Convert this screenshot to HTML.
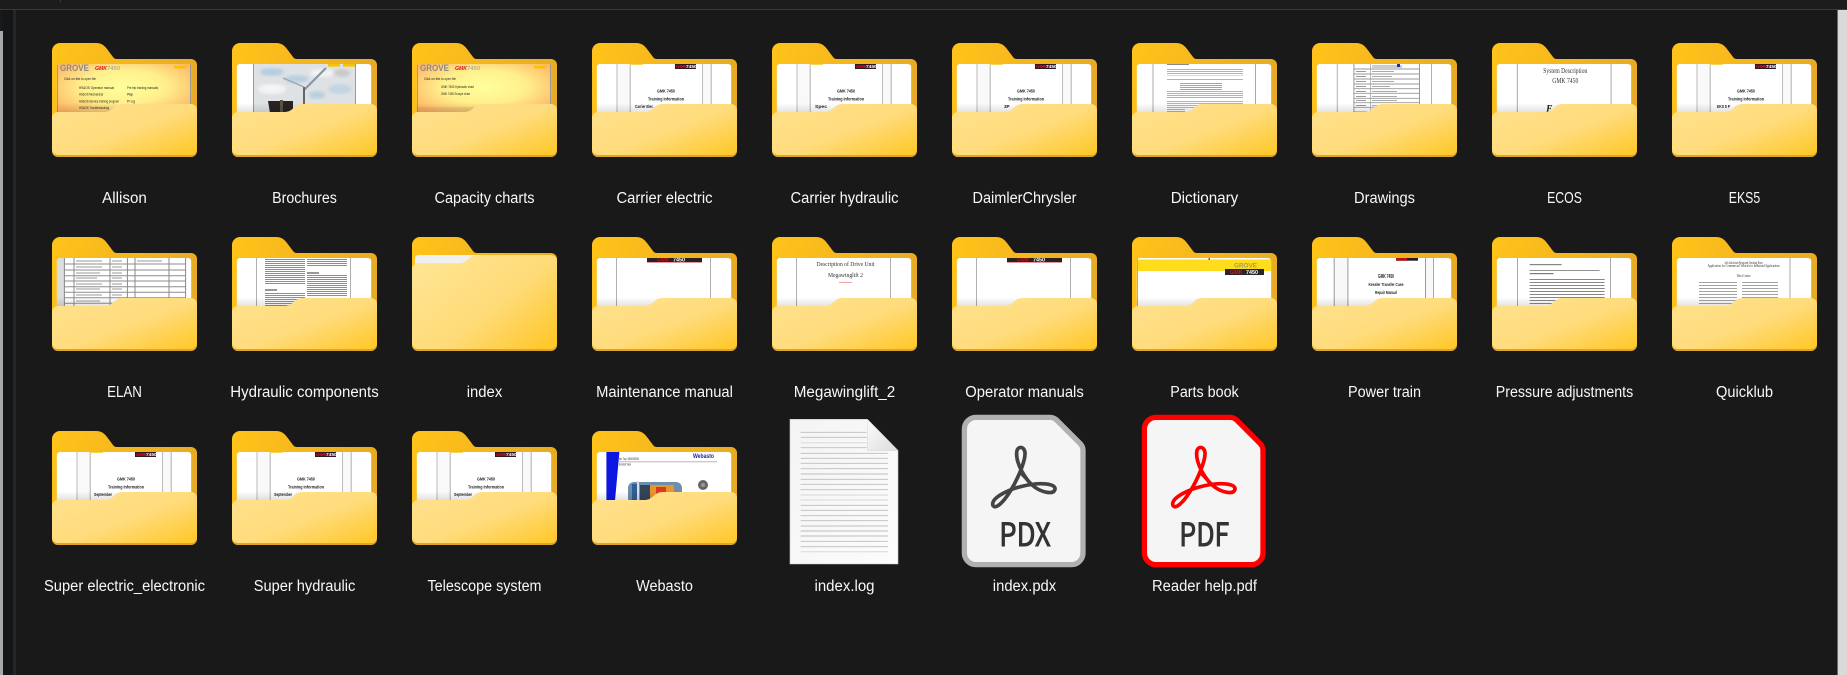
<!DOCTYPE html>
<html lang="en"><head><meta charset="utf-8"><title>Folder view</title>
<style>
html,body{margin:0;padding:0;background:#191919;width:1847px;height:675px;overflow:hidden}
svg{display:block;position:absolute;left:0;top:0}
.l{font:15.5px "Liberation Sans",sans-serif;fill:#f6f8fa;text-anchor:middle}
.t{font-family:"Liberation Sans",sans-serif;fill:#222}
.s{font-family:"Liberation Serif",serif;fill:#333;text-anchor:middle}
.b{font-weight:bold;font-family:"Liberation Sans",sans-serif;fill:#222;text-anchor:middle}
.big{font:400 32px "Noto Sans CJK SC","Liberation Sans",sans-serif;fill:#333;stroke:#333;stroke-width:.9}
</style></head><body>
<svg width="1847" height="675" viewBox="0 0 1847 675" xmlns="http://www.w3.org/2000/svg">
<defs>
<linearGradient id="bk" x1="0" y1="0" x2="1" y2=".3"><stop offset="0" stop-color="#ffc41a"/><stop offset=".4" stop-color="#f7b91c"/><stop offset="1" stop-color="#e6ab24"/></linearGradient>
<linearGradient id="fr" x1=".08" y1=".15" x2=".95" y2=".95"><stop offset="0" stop-color="#ffe08a"/><stop offset=".5" stop-color="#ffdc7c"/><stop offset="1" stop-color="#ffc92f"/></linearGradient>
<linearGradient id="frt" x1=".05" y1=".15" x2=".98" y2=".9"><stop offset="0" stop-color="#ffe491"/><stop offset=".55" stop-color="#ffdb78"/><stop offset="1" stop-color="#ffc82c"/></linearGradient>
<linearGradient id="sh" x1="0" y1="0" x2="0" y2="1"><stop offset="0" stop-color="#000" stop-opacity="0"/><stop offset="1" stop-color="#000" stop-opacity=".12"/></linearGradient>
<radialGradient id="gr" cx=".5" cy=".42" r=".62"><stop offset="0" stop-color="#ffff9c"/><stop offset=".5" stop-color="#fff08c"/><stop offset="1" stop-color="#ffb666"/></radialGradient>
<linearGradient id="page" x1="0" y1="0" x2="1" y2="1"><stop offset="0" stop-color="#f4f4f4"/><stop offset="1" stop-color="#fcfcfc"/></linearGradient>
<linearGradient id="flap" x1="0" y1="0" x2="1" y2="1"><stop offset="0" stop-color="#fcfcfc"/><stop offset="1" stop-color="#dcdcdc"/></linearGradient>
<pattern id="tl" width="3" height="2" patternUnits="userSpaceOnUse"><rect width="3" height="1" fill="#444"/></pattern>
<pattern id="tlr" width="3" height="2" patternUnits="userSpaceOnUse"><rect width="3" height="1" fill="#d8352a"/></pattern>
<pattern id="tl3" width="3" height="3" patternUnits="userSpaceOnUse"><rect width="3" height="1" fill="#555"/></pattern>
<clipPath id="pc"><rect x="4.7" y="21" width="134.6" height="54" rx="3"/></clipPath>
<filter id="bl"><feGaussianBlur stdDeviation="1.6"/></filter>
<filter id="sf" x="-5%" y="-5%" width="110%" height="110%"><feGaussianBlur stdDeviation=".35"/></filter>
<g id="back"><path fill="url(#bk)" d="M8 0H44C49 0 52 2 55 6L61 14C62 15.5 63.5 16 65 16H139A6 6 0 0 1 145 22V108A6 6 0 0 1 139 114H6A6 6 0 0 1 0 108V8A8 8 0 0 1 8 0Z"/><rect x="1" y="100" width="143" height="14" rx="6" fill="#e0a428"/></g>
<g id="front"><rect x="4.7" y="60" width="134.6" height="10" fill="url(#sh)"/><path fill="url(#fr)" d="M6 69H52C56 69 58 68 61 65.5C64 62.5 67 61 71 61H139A6 6 0 0 1 145 67V106A6 6 0 0 1 139 112H6A6 6 0 0 1 0 106V75A6 6 0 0 1 6 69Z"/></g>
<g id="paper"><rect x="4.7" y="21" width="134.6" height="54" rx="3" fill="#fff"/></g>
<g id="v2"><rect x="24" y="21" width="1" height="54" fill="#b0b0b0"/><rect x="118" y="21" width="1" height="54" fill="#b0b0b0"/></g>
<g id="v4"><rect x="25" y="21" width="13" height="54" fill="#f9f9f9"/><rect x="110" y="21" width="9" height="54" fill="#f9f9f9"/><rect x="24.5" y="21" width="1" height="54" fill="#bbb"/><rect x="37.7" y="21" width="1" height="54" fill="#b0b0b0"/><rect x="110" y="21" width="1" height="54" fill="#bbb"/><rect x="118.7" y="21" width="1" height="54" fill="#b0b0b0"/><rect x="38" y="21" width="13" height="1" fill="#f5d65a"/></g>
<g id="acro"><path fill="none" stroke="currentColor" stroke-width="11" stroke-linejoin="round" d="M100 288C108 296 128 280 150 245C175 205 197 150 195 128C193 107 171 107 170 128C168 160 195 210 225 232C245 246 280 256 285 238C288 220 240 216 190 228C145 238 98 262 98 282C98 285 99 287 100 288Z"/><path fill="none" stroke="currentColor" stroke-width="5" d="M183 175L152 240M180 190L218 230M160 238L212 224"/></g>
<g id="pageic"><path fill="#f5f5f5" stroke="currentColor" stroke-width="5.3" d="M976 417.4H1050C1053 417.4 1055 418.4 1057 420.4L1079 442.4C1082 445.4 1083 447 1083 451V553A11.6 11.6 0 0 1 1071.4 564.6H976A11.6 11.6 0 0 1 964.4 553V429A11.6 11.6 0 0 1 976 417.4Z"/></g>
</defs>

<rect width="1847" height="675" fill="#191919"/>
<rect width="1847" height="9" fill="#1c1c1c"/>
<rect y="9" width="1847" height="1" fill="#3a3a3a"/>
<rect x="60" y="0" width="1" height="2" fill="#3a3a3a"/>
<rect x="3" y="10" width="10" height="665" fill="#14171a"/>
<rect x="13" y="10" width="3" height="665" fill="#262626"/>
<rect x="0" y="31" width="3" height="644" fill="#a8a8a8"/>
<rect x="1838" y="10" width="9" height="665" fill="#dadada"/>
<rect x="1837" y="10" width="1" height="665" fill="#6a6a6a"/>

<!-- ROW 1 -->
<g transform="translate(52,43)"><use href="#back"/><g clip-path="url(#pc)" filter="url(#sf)"><rect x="4.7" y="21" width="134.6" height="54" fill="url(#gr)"/>
<rect x="5" y="21" width="1" height="54" fill="#999"/><rect x="138" y="21" width="1" height="54" fill="#999"/>
<text x="8" y="28" font-size="9" font-weight="bold" font-family="Liberation Sans" fill="#8a8a8a" textLength="29" lengthAdjust="spacingAndGlyphs">GROVE</text>
<text x="43" y="27" font-size="5" font-weight="bold" font-style="italic" font-family="Liberation Sans" fill="#d01818" textLength="12" lengthAdjust="spacingAndGlyphs">GMK</text><text x="55" y="27" font-size="5" font-family="Liberation Sans" fill="#999" textLength="13" lengthAdjust="spacingAndGlyphs">7450</text>
<rect x="122" y="23" width="12" height="2.4" fill="#f5c400"/>
<text class="t" x="12" y="37" font-size="3.4" textLength="32" lengthAdjust="spacingAndGlyphs">Click on title to open file</text>
<text class="t" x="27" y="46" font-size="3.4" textLength="35" lengthAdjust="spacingAndGlyphs">HS&amp;OS Operator manual</text><text class="t" x="75" y="46" font-size="3.4" textLength="31" lengthAdjust="spacingAndGlyphs">Pre trip training manuals</text>
<text class="t" x="27" y="52.5" font-size="3.4" textLength="24" lengthAdjust="spacingAndGlyphs">HS&amp;OS Mechanical</text><text class="t" x="75" y="52.5" font-size="3.4" textLength="6">Prep</text>
<text class="t" x="27" y="59.5" font-size="3.4" textLength="40" lengthAdjust="spacingAndGlyphs">HS&amp;OS Service training program</text><text class="t" x="75" y="59.5" font-size="3.4" textLength="8">Prog</text>
<text class="t" x="27" y="66" font-size="3.4" textLength="30" lengthAdjust="spacingAndGlyphs">HS&amp;OS Troubleshooting</text></g><use href="#front"/></g>

<g transform="translate(232,43)"><use href="#back"/><g clip-path="url(#pc)" filter="url(#sf)"><use href="#paper"/>
<rect x="21" y="21" width="103" height="54" fill="#dfe2e4"/>
<ellipse cx="40" cy="29" rx="12" ry="4" fill="#b5cde0" filter="url(#bl)"/><ellipse cx="65" cy="36" rx="12" ry="4" fill="#b9d0e1" filter="url(#bl)"/><ellipse cx="90" cy="30" rx="12" ry="4" fill="#f2f3f4" filter="url(#bl)"/><ellipse cx="108" cy="46" rx="12" ry="5" fill="#c2d4e2" filter="url(#bl)"/><ellipse cx="40" cy="46" rx="14" ry="5" fill="#f4f5f5" filter="url(#bl)"/><ellipse cx="85" cy="52" rx="8" ry="4" fill="#b8cfe0" filter="url(#bl)"/><ellipse cx="110" cy="30" rx="8" ry="4" fill="#c9c9cb" filter="url(#bl)"/>
<rect x="21" y="21" width="1" height="54" fill="#999"/><rect x="123" y="21" width="1" height="54" fill="#999"/>
<path d="M72 47L94 25" stroke="#8a97a3" stroke-width="2.2" fill="none"/><path d="M51 35L72 44" stroke="#9aa6b0" stroke-width="1.4" fill="none"/><path d="M72 44V70" stroke="#666" stroke-width="2" fill="none"/>
<path d="M36 58H61V70H38Z" fill="#2b2422"/><rect x="48" y="57" width="3" height="13" fill="#554"/><rect x="61" y="66" width="6" height="5" fill="#d8b020"/>
<rect x="96" y="21" width="12" height="2.6" fill="#f5c400"/><rect x="111" y="21" width="12" height="2.6" fill="#f5c400"/></g><use href="#front"/></g>

<g transform="translate(412,43)"><use href="#back"/><g clip-path="url(#pc)" filter="url(#sf)"><rect x="4.7" y="21" width="134.6" height="54" fill="url(#gr)"/>
<rect x="5" y="21" width="1" height="54" fill="#999"/><rect x="138" y="21" width="1" height="54" fill="#999"/>
<text x="8" y="28" font-size="9" font-weight="bold" font-family="Liberation Sans" fill="#8a8a8a" textLength="29" lengthAdjust="spacingAndGlyphs">GROVE</text>
<text x="43" y="27" font-size="5" font-weight="bold" font-style="italic" font-family="Liberation Sans" fill="#d01818" textLength="12" lengthAdjust="spacingAndGlyphs">GMK</text><text x="55" y="27" font-size="5" font-family="Liberation Sans" fill="#999" textLength="13" lengthAdjust="spacingAndGlyphs">7450</text>
<rect x="122" y="23" width="12" height="2.4" fill="#f5c400"/>
<text class="t" x="12" y="37" font-size="3.4" textLength="32" lengthAdjust="spacingAndGlyphs">Click on title to open file</text>
<text class="t" x="29" y="45" font-size="3.4" textLength="33" lengthAdjust="spacingAndGlyphs">GMK 7450 Hydraulic chart</text>
<text class="t" x="29" y="52" font-size="3.4" textLength="29" lengthAdjust="spacingAndGlyphs">GMK 7450 Europe chart</text>
<rect x="5" y="64" width="134" height="6" fill="#c9925a" opacity=".22"/></g><use href="#front"/></g>

<g transform="translate(592,43)"><use href="#back"/><g clip-path="url(#pc)" filter="url(#sf)"><use href="#paper"/><use href="#v4"/>
<rect x="83" y="21" width="21" height="5" fill="#2e1420"/><text x="84" y="25.2" font-size="4.8" font-weight="bold" font-style="italic" font-family="Liberation Sans" fill="#e01a1a">GMK</text><text x="94" y="25.2" font-size="4.8" font-weight="bold" font-family="Liberation Sans" fill="#fff">7450</text>
<text class="b" x="74" y="49.5" font-size="4.6" textLength="18" lengthAdjust="spacingAndGlyphs">GMK 7450</text>
<text class="b" x="74" y="57.5" font-size="4.6" textLength="36" lengthAdjust="spacingAndGlyphs">Training Information</text>
<text x="43" y="65" font-size="4.6" font-weight="bold" font-family="Liberation Sans" fill="#222" textLength="18" lengthAdjust="spacingAndGlyphs">Carrier Elec</text></g><use href="#front"/></g>

<g transform="translate(772,43)"><use href="#back"/><g clip-path="url(#pc)" filter="url(#sf)"><use href="#paper"/><use href="#v4"/>
<rect x="83" y="21" width="21" height="5" fill="#2e1420"/><text x="84" y="25.2" font-size="4.8" font-weight="bold" font-style="italic" font-family="Liberation Sans" fill="#e01a1a">GMK</text><text x="94" y="25.2" font-size="4.8" font-weight="bold" font-family="Liberation Sans" fill="#fff">7450</text>
<text class="b" x="74" y="49.5" font-size="4.6" textLength="18" lengthAdjust="spacingAndGlyphs">GMK 7450</text>
<text class="b" x="74" y="57.5" font-size="4.6" textLength="36" lengthAdjust="spacingAndGlyphs">Training Information</text>
<text x="43" y="65" font-size="4.6" font-weight="bold" font-family="Liberation Sans" fill="#222" textLength="12" lengthAdjust="spacingAndGlyphs">Spec</text></g><use href="#front"/></g>

<g transform="translate(952,43)"><use href="#back"/><g clip-path="url(#pc)" filter="url(#sf)"><use href="#paper"/><use href="#v4"/>
<rect x="83" y="21" width="21" height="5" fill="#2e1420"/><text x="84" y="25.2" font-size="4.8" font-weight="bold" font-style="italic" font-family="Liberation Sans" fill="#e01a1a">GMK</text><text x="94" y="25.2" font-size="4.8" font-weight="bold" font-family="Liberation Sans" fill="#fff">7450</text>
<text class="b" x="74" y="49.5" font-size="4.6" textLength="18" lengthAdjust="spacingAndGlyphs">GMK 7450</text>
<text class="b" x="74" y="57.5" font-size="4.6" textLength="36" lengthAdjust="spacingAndGlyphs">Training Information</text>
<text x="52" y="65" font-size="4.6" font-weight="bold" font-family="Liberation Sans" fill="#222">3P</text></g><use href="#front"/></g>

<g transform="translate(1132,43)"><use href="#back"/><g clip-path="url(#pc)" filter="url(#sf)"><use href="#paper"/>
<rect x="20.5" y="21" width="1" height="54" fill="#aaa"/><rect x="123" y="21" width="1" height="54" fill="#aaa"/>
<rect x="35" y="21" width="22" height="1" fill="#888"/>
<g opacity=".4"><rect x="35" y="25.5" width="76" height="7" fill="url(#tl)"/>
<rect x="35" y="35" width="76" height="3" fill="url(#tl)"/>
<rect x="35" y="48" width="76" height="7" fill="url(#tl)"/>
<rect x="35" y="57" width="76" height="8" fill="url(#tl)"/>
<rect x="35" y="66" width="18" height="4" fill="url(#tl)"/></g>
<rect x="48" y="40" width="42" height="7" fill="url(#tlr)" opacity=".6"/></g><use href="#front"/></g>

<g transform="translate(1312,43)"><use href="#back"/><g clip-path="url(#pc)" filter="url(#sf)"><use href="#paper"/>
<rect x="24.8" y="21" width="1" height="54" fill="#b0b0b0"/><rect x="41.4" y="21" width="1" height="54" fill="#999"/><rect x="107" y="21" width="1" height="54" fill="#999"/><rect x="119" y="21" width="1" height="54" fill="#b0b0b0"/>
<rect x="58" y="21" width="1" height="54" fill="#bbb"/>
<path d="M41.4 26H107M41.4 31H107M41.4 36H107M41.4 41H107M41.4 45.7H107M41.4 50.3H107M41.4 55.3H107M41.4 59.7H107M41.4 64.3H107M41.4 69H107" stroke="#999" stroke-width=".9"/>
<rect x="60" y="22" width="30" height="3" fill="#ccc"/><rect x="85" y="21" width="3" height="3" fill="#1a2fb0"/>
<rect x="44" y="28" width="10" height="1" fill="#999"/><rect x="60" y="28" width="22" height="1" fill="#aaa"/><rect x="44" y="33" width="10" height="1" fill="#999"/><rect x="60" y="33" width="20" height="1" fill="#aaa"/><rect x="44" y="38" width="10" height="1" fill="#999"/><rect x="60" y="38" width="22" height="1" fill="#aaa"/><rect x="44" y="43" width="10" height="1" fill="#999"/><rect x="60" y="43" width="18" height="1" fill="#aaa"/><rect x="44" y="48" width="10" height="1" fill="#999"/><rect x="60" y="48" width="25" height="1" fill="#aaa"/><rect x="44" y="53" width="10" height="1" fill="#999"/><rect x="60" y="53" width="25" height="1" fill="#aaa"/><rect x="44" y="57" width="10" height="1" fill="#999"/><rect x="60" y="57" width="25" height="1" fill="#aaa"/><rect x="44" y="62" width="10" height="1" fill="#999"/><rect x="60" y="62" width="14" height="1" fill="#aaa"/></g><use href="#front"/></g>

<g transform="translate(1492,43)"><use href="#back"/><g clip-path="url(#pc)" filter="url(#sf)"><use href="#paper"/>
<rect x="24.8" y="21" width="1" height="54" fill="#aaa"/><rect x="118.6" y="21" width="1" height="54" fill="#aaa"/>
<text class="s" x="73.3" y="30" font-size="6.8" textLength="44" lengthAdjust="spacingAndGlyphs">System Description</text>
<text class="s" x="73.3" y="40" font-size="6.8" textLength="26" lengthAdjust="spacingAndGlyphs">GMK 7450</text>
<text x="54" y="69" font-size="10" font-weight="bold" font-style="italic" font-family="Liberation Serif" fill="#222">E</text></g><use href="#front"/></g>

<g transform="translate(1672,43)"><use href="#back"/><g clip-path="url(#pc)" filter="url(#sf)"><use href="#paper"/><use href="#v4"/>
<rect x="83" y="21" width="21" height="5" fill="#2e1420"/><text x="84" y="25.2" font-size="4.8" font-weight="bold" font-style="italic" font-family="Liberation Sans" fill="#e01a1a">GMK</text><text x="94" y="25.2" font-size="4.8" font-weight="bold" font-family="Liberation Sans" fill="#fff">7450</text>
<text class="b" x="74" y="49.5" font-size="4.6" textLength="18" lengthAdjust="spacingAndGlyphs">GMK 7450</text>
<text class="b" x="74" y="57.5" font-size="4.6" textLength="36" lengthAdjust="spacingAndGlyphs">Training Information</text>
<text x="45" y="65" font-size="4.6" font-weight="bold" font-family="Liberation Sans" fill="#222" textLength="13" lengthAdjust="spacingAndGlyphs">EKS 5 P</text></g><use href="#front"/></g>

<!-- ROW 2 -->
<g transform="translate(52,237)"><use href="#back"/><g clip-path="url(#pc)" filter="url(#sf)"><use href="#paper"/>
<rect x="5" y="21" width="7" height="54" fill="#ddd"/>
<path d="M12.4 21V75M22 21V75M58 21V75M75.4 21V75M83 21V75M117 21V75M133.6 21V75" stroke="#888" stroke-width="1" fill="none"/>
<path d="M12 27H134M12 33H134M12 38.7H134M12 44H134M12 49.7H134M12 55.3H134M12 60.7H134M12 66.3H134" stroke="#8d8d8d" stroke-width="1" fill="none"/>
<path d="M24 24H50M60 24H70M85 24H110M24 30H50M60 30H70M24 36H48M60 36H70M24 41H45M60 41H70M24 47H50M60 47H70M24 52H48M60 52H70M24 58H50M60 58H70M24 64H48" stroke="#999" stroke-width=".9" fill="none"/></g><use href="#front"/></g>

<g transform="translate(232,237)"><use href="#back"/><g clip-path="url(#pc)" filter="url(#sf)"><use href="#paper"/><use href="#v2"/>
<g opacity=".6"><rect x="33" y="21" width="40" height="26" fill="url(#tl)"/><rect x="33" y="52" width="12" height="2" fill="#555"/><rect x="33" y="55" width="40" height="14" fill="url(#tl)"/>
<rect x="75" y="21" width="40" height="8" fill="url(#tl)"/><rect x="75" y="35" width="12" height="2" fill="#555"/><rect x="75" y="38" width="40" height="21" fill="url(#tl)"/></g></g><use href="#front"/></g>

<g transform="translate(412,237)"><use href="#back"/>
<path d="M3 26V21A3 3 0 0 1 6 18H68V28H3Z" fill="#f0f0f0"/>
<path fill="url(#frt)" d="M6 26.3H47C51 26.3 53 25 56 22.3C59 19.5 62 18 66 18H139A6 6 0 0 1 145 24V106A6 6 0 0 1 139 112H6A6 6 0 0 1 0 106V32A6 6 0 0 1 6 26.3Z"/></g>

<g transform="translate(592,237)"><use href="#back"/><g clip-path="url(#pc)" filter="url(#sf)"><use href="#paper"/><use href="#v2"/>
<rect x="55" y="21" width="55" height="4.3" fill="#252122"/><rect x="55" y="25" width="55" height=".6" fill="#d85060"/><text x="65" y="24.7" font-size="5.4" font-weight="bold" font-family="Liberation Sans" fill="#b81818">GMK</text><text x="81" y="24.7" font-size="5.4" font-weight="bold" font-family="Liberation Sans" fill="#fff">7450</text></g><use href="#front"/></g>

<g transform="translate(772,237)"><use href="#back"/><g clip-path="url(#pc)" filter="url(#sf)"><use href="#paper"/><use href="#v2"/>
<text class="s" x="73.5" y="29" font-size="6" textLength="58" lengthAdjust="spacingAndGlyphs">Description of Drive Unit</text>
<text class="s" x="73.5" y="40" font-size="6.6" textLength="35" lengthAdjust="spacingAndGlyphs">Megawinglift 2</text>
<rect x="67" y="45" width="13" height="1" fill="#f0a0a0"/></g><use href="#front"/></g>

<g transform="translate(952,237)"><use href="#back"/><g clip-path="url(#pc)" filter="url(#sf)"><use href="#paper"/><use href="#v2"/>
<rect x="55" y="21" width="55" height="4.3" fill="#252122"/><rect x="55" y="25" width="55" height=".6" fill="#d85060"/><text x="65" y="24.7" font-size="5.4" font-weight="bold" font-family="Liberation Sans" fill="#b81818">GMK</text><text x="81" y="24.7" font-size="5.4" font-weight="bold" font-family="Liberation Sans" fill="#fff">7450</text></g><use href="#front"/></g>

<g transform="translate(1132,237)"><use href="#back"/><g clip-path="url(#pc)" filter="url(#sf)"><use href="#paper"/>
<rect x="4.7" y="22.5" width="134.6" height="11.5" fill="#ffdc1c"/><rect x="5" y="21" width="1" height="54" fill="#aaa"/>
<rect x="76.5" y="21" width="1.4" height="2" fill="#d03030"/>
<text x="102" y="30.5" font-size="6.4" font-weight="bold" font-family="Liberation Sans" fill="#a09a70" textLength="23" lengthAdjust="spacingAndGlyphs">GROVE</text>
<rect x="93" y="32" width="39" height="6" fill="#2a2527"/><text x="98" y="37" font-size="5.4" font-weight="bold" font-family="Liberation Sans" fill="#c81c1c">GMK</text><text x="114" y="37" font-size="5.4" font-weight="bold" font-family="Liberation Sans" fill="#fff">7450</text></g><use href="#front"/></g>

<g transform="translate(1312,237)"><use href="#back"/><g clip-path="url(#pc)" filter="url(#sf)"><use href="#paper"/>
<rect x="22" y="21" width="13" height="54" fill="#f8f8f8"/><rect x="113" y="21" width="8" height="54" fill="#f8f8f8"/>
<rect x="21.7" y="21" width="1" height="54" fill="#999"/><rect x="35.4" y="21" width="1" height="54" fill="#999"/><rect x="113" y="21" width="1" height="54" fill="#999"/><rect x="121" y="21" width="1" height="54" fill="#aaa"/>
<rect x="84" y="20.7" width="22" height="3" fill="#2e1420"/><rect x="84" y="20.7" width="11" height="3" fill="#b01818"/>
<text class="b" x="74" y="40.8" font-size="5" textLength="16" lengthAdjust="spacingAndGlyphs">GMK 7450</text>
<text class="b" x="74" y="49" font-size="4.6" textLength="35" lengthAdjust="spacingAndGlyphs">Kessler Transfer Case</text>
<text class="b" x="74" y="57" font-size="4.6" textLength="22" lengthAdjust="spacingAndGlyphs">Repair Manual</text></g><use href="#front"/></g>

<g transform="translate(1492,237)"><use href="#back"/><g clip-path="url(#pc)" filter="url(#sf)"><use href="#paper"/><rect x="25" y="21" width="1" height="54" fill="#aaa"/><rect x="118" y="21" width="1" height="54" fill="#aaa"/>
<g opacity=".7"><rect x="37.6" y="27" width="32" height="1.2" fill="#555"/><rect x="37.6" y="33" width="70" height="1" fill="#666"/><rect x="37.6" y="36" width="24" height="1.2" fill="#444"/>
<rect x="37.6" y="41" width="75" height="20" fill="url(#tl3)"/><rect x="37.6" y="62" width="40" height="12" fill="url(#tl3)"/></g></g><use href="#front"/></g>

<g transform="translate(1672,237)"><use href="#back"/><g clip-path="url(#pc)" filter="url(#sf)"><use href="#paper"/><rect x="117.5" y="21" width="1" height="54" fill="#aaa"/>
<text class="s" x="71.6" y="27" font-size="3.6" textLength="38" lengthAdjust="spacingAndGlyphs">with Lubrication Pumps and Operating Times</text>
<text class="s" x="71.6" y="30" font-size="3.6" textLength="72" lengthAdjust="spacingAndGlyphs">Application for Commercial Vehicles or Industrial Applications</text>
<text class="s" x="71.6" y="40" font-size="3.6" textLength="14" lengthAdjust="spacingAndGlyphs">Table of Contents</text>
<rect x="27" y="44" width="38" height="24" fill="url(#tl3)" opacity=".55"/><rect x="70" y="44" width="36" height="24" fill="url(#tl3)" opacity=".55"/></g><use href="#front"/></g>

<!-- ROW 3 -->
<g transform="translate(52,431)"><use href="#back"/><g clip-path="url(#pc)" filter="url(#sf)"><use href="#paper"/><use href="#v4"/>
<rect x="83" y="21" width="21" height="5" fill="#2e1420"/><text x="84" y="25.2" font-size="4.8" font-weight="bold" font-style="italic" font-family="Liberation Sans" fill="#e01a1a">GMK</text><text x="94" y="25.2" font-size="4.8" font-weight="bold" font-family="Liberation Sans" fill="#fff">7450</text>
<text class="b" x="74" y="49.5" font-size="4.6" textLength="18" lengthAdjust="spacingAndGlyphs">GMK 7450</text>
<text class="b" x="74" y="57.5" font-size="4.6" textLength="36" lengthAdjust="spacingAndGlyphs">Training Information</text>
<text x="42" y="65" font-size="4.6" font-weight="bold" font-family="Liberation Sans" fill="#222" textLength="18" lengthAdjust="spacingAndGlyphs">September</text></g><use href="#front"/></g>

<g transform="translate(232,431)"><use href="#back"/><g clip-path="url(#pc)" filter="url(#sf)"><use href="#paper"/><use href="#v4"/>
<rect x="83" y="21" width="21" height="5" fill="#2e1420"/><text x="84" y="25.2" font-size="4.8" font-weight="bold" font-style="italic" font-family="Liberation Sans" fill="#e01a1a">GMK</text><text x="94" y="25.2" font-size="4.8" font-weight="bold" font-family="Liberation Sans" fill="#fff">7450</text>
<text class="b" x="74" y="49.5" font-size="4.6" textLength="18" lengthAdjust="spacingAndGlyphs">GMK 7450</text>
<text class="b" x="74" y="57.5" font-size="4.6" textLength="36" lengthAdjust="spacingAndGlyphs">Training Information</text>
<text x="42" y="65" font-size="4.6" font-weight="bold" font-family="Liberation Sans" fill="#222" textLength="18" lengthAdjust="spacingAndGlyphs">September</text></g><use href="#front"/></g>

<g transform="translate(412,431)"><use href="#back"/><g clip-path="url(#pc)" filter="url(#sf)"><use href="#paper"/><use href="#v4"/>
<rect x="83" y="21" width="21" height="5" fill="#2e1420"/><text x="84" y="25.2" font-size="4.8" font-weight="bold" font-style="italic" font-family="Liberation Sans" fill="#e01a1a">GMK</text><text x="94" y="25.2" font-size="4.8" font-weight="bold" font-family="Liberation Sans" fill="#fff">7450</text>
<text class="b" x="74" y="49.5" font-size="4.6" textLength="18" lengthAdjust="spacingAndGlyphs">GMK 7450</text>
<text class="b" x="74" y="57.5" font-size="4.6" textLength="36" lengthAdjust="spacingAndGlyphs">Training Information</text>
<text x="42" y="65" font-size="4.6" font-weight="bold" font-family="Liberation Sans" fill="#222" textLength="18" lengthAdjust="spacingAndGlyphs">September</text></g><use href="#front"/></g>

<g transform="translate(592,431)"><use href="#back"/><g clip-path="url(#pc)" filter="url(#sf)"><use href="#paper"/>
<path d="M14.4 21H27.4L22.5 75H14.4Z" fill="#0a14e0"/>
<text x="27" y="29" font-size="3.8" font-family="Liberation Sans" fill="#333" textLength="20" lengthAdjust="spacingAndGlyphs">Air Top 3500/5000</text>
<rect x="27" y="30" width="98" height="1.4" fill="#ccc"/>
<text x="27" y="34.5" font-size="3.8" font-family="Liberation Sans" fill="#333" textLength="12" lengthAdjust="spacingAndGlyphs">Exoded View</text>
<text x="101" y="27" font-size="6" font-weight="bold" font-family="Liberation Sans" fill="#1a2a9c" textLength="21" lengthAdjust="spacingAndGlyphs">Webasto</text>
<rect x="36" y="51" width="54" height="22" rx="6" fill="#6d8fab"/><rect x="40" y="53" width="6" height="20" fill="#2f5f96"/><rect x="48" y="54" width="10" height="20" fill="#33455a"/><rect x="58" y="54" width="24" height="20" fill="#e8952f"/><rect x="64" y="56" width="10" height="16" fill="#d83a20"/><rect x="45" y="50" width="2" height="24" fill="#dde"/>
<circle cx="111" cy="54" r="5" fill="#666"/><circle cx="111" cy="54" r="2" fill="#999"/></g><use href="#front"/></g>

<!-- index.log -->
<path d="M790 419.3H867.4L898 450.5V564H790Z" fill="url(#page)" stroke="#c8c8c8" stroke-width=".6"/>
<path d="M867.4 419.3V450.7H898Z" fill="url(#flap)" stroke="#d8d8d8" stroke-width=".5"/>
<path d="M800.6 432.3H866.7M800.6 437.3H866.7M800.6 447.7H866.7M800.6 453.3H888M800.6 458.3H888M800.6 463.3H888M800.6 468.7H888M800.6 474H888M800.6 479.3H888M800.6 484.3H888M800.6 489.7H888M800.6 505.3H888M800.6 510.3H888M800.6 515.7H888M800.6 520.7H888M800.6 526H888M800.6 531H888M800.6 536H888M800.6 541.3H888M800.6 546.7H888" stroke="#bdbdbd" stroke-width=".9" fill="none"/>
<path d="M800.6 442.7H866.7M800.6 495H888M800.6 500H888M800.6 551.7H888" stroke="#e2e2e2" stroke-width="1.4" fill="none"/>

<!-- index.pdx -->
<g color="#b0b0b0"><use href="#pageic"/></g>
<g color="#444" transform="translate(960,410) scale(.3333)"><use href="#acro"/></g>
<text class="big" x="999.3" y="546" textLength="51.4" lengthAdjust="spacingAndGlyphs">PDX</text>

<!-- Reader help.pdf -->
<g color="#fe0000" transform="translate(180,0)"><use href="#pageic"/></g>
<g color="#fe0000" transform="translate(1140,410) scale(.3333)"><use href="#acro"/></g>
<text class="big" x="1179.3" y="546" textLength="50" lengthAdjust="spacingAndGlyphs">PDF</text>

<!-- labels -->
<text class="l" x="124.5" y="203" textLength="44.7" lengthAdjust="spacingAndGlyphs">Allison</text>
<text class="l" x="304.5" y="203" textLength="64.7" lengthAdjust="spacingAndGlyphs">Brochures</text>
<text class="l" x="484.5" y="203" textLength="100" lengthAdjust="spacingAndGlyphs">Capacity charts</text>
<text class="l" x="664.5" y="203" textLength="96" lengthAdjust="spacingAndGlyphs">Carrier electric</text>
<text class="l" x="844.5" y="203" textLength="108" lengthAdjust="spacingAndGlyphs">Carrier hydraulic</text>
<text class="l" x="1024.5" y="203" textLength="104" lengthAdjust="spacingAndGlyphs">DaimlerChrysler</text>
<text class="l" x="1204.5" y="203" textLength="67.6" lengthAdjust="spacingAndGlyphs">Dictionary</text>
<text class="l" x="1384.5" y="203" textLength="61" lengthAdjust="spacingAndGlyphs">Drawings</text>
<text class="l" x="1564.5" y="203" textLength="34.8" lengthAdjust="spacingAndGlyphs">ECOS</text>
<text class="l" x="1744.5" y="203" textLength="31.4" lengthAdjust="spacingAndGlyphs">EKS5</text>

<text class="l" x="124.5" y="397" textLength="34.8" lengthAdjust="spacingAndGlyphs">ELAN</text>
<text class="l" x="304.5" y="397" textLength="148.4" lengthAdjust="spacingAndGlyphs">Hydraulic components</text>
<text class="l" x="484.5" y="397" textLength="35.5" lengthAdjust="spacingAndGlyphs">index</text>
<text class="l" x="664.5" y="397" textLength="136.8" lengthAdjust="spacingAndGlyphs">Maintenance manual</text>
<text class="l" x="844.5" y="397" textLength="101.5" lengthAdjust="spacingAndGlyphs">Megawinglift_2</text>
<text class="l" x="1024.5" y="397" textLength="118.5" lengthAdjust="spacingAndGlyphs">Operator manuals</text>
<text class="l" x="1204.5" y="397" textLength="68.4" lengthAdjust="spacingAndGlyphs">Parts book</text>
<text class="l" x="1384.5" y="397" textLength="73" lengthAdjust="spacingAndGlyphs">Power train</text>
<text class="l" x="1564.5" y="397" textLength="137.4" lengthAdjust="spacingAndGlyphs">Pressure adjustments</text>
<text class="l" x="1744.5" y="397" textLength="57" lengthAdjust="spacingAndGlyphs">Quicklub</text>

<text class="l" x="124.5" y="591" textLength="161" lengthAdjust="spacingAndGlyphs">Super electric_electronic</text>
<text class="l" x="304.5" y="591" textLength="101.5" lengthAdjust="spacingAndGlyphs">Super hydraulic</text>
<text class="l" x="484.5" y="591" textLength="114" lengthAdjust="spacingAndGlyphs">Telescope system</text>
<text class="l" x="664.5" y="591" textLength="56.8" lengthAdjust="spacingAndGlyphs">Webasto</text>
<text class="l" x="844.5" y="591" textLength="60" lengthAdjust="spacingAndGlyphs">index.log</text>
<text class="l" x="1024.5" y="591" textLength="63.4" lengthAdjust="spacingAndGlyphs">index.pdx</text>
<text class="l" x="1204.5" y="591" textLength="105" lengthAdjust="spacingAndGlyphs">Reader help.pdf</text>
</svg>
</body></html>
